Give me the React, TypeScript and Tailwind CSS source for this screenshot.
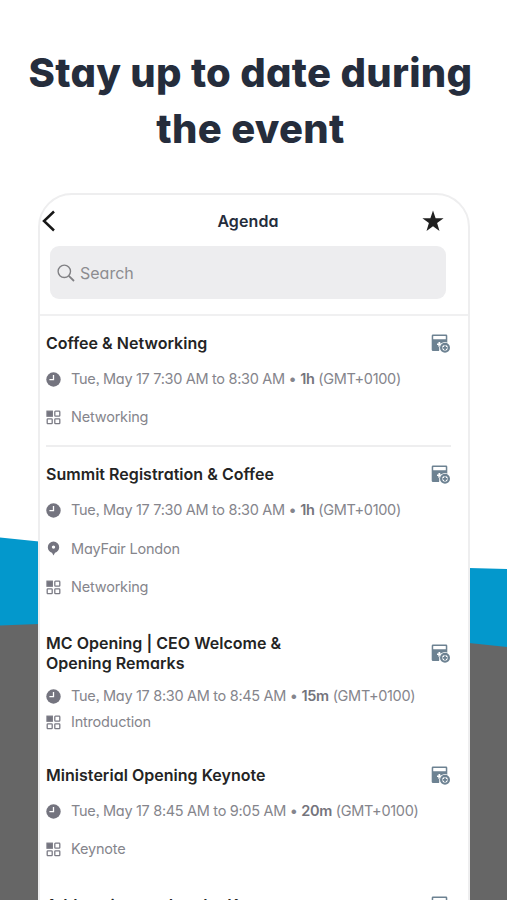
import type { ReactNode } from 'react';

const font = "font-['Inter','Open_Sans',sans-serif] [font-feature-settings:'cv11','ss03']";

function ClockIcon() {
  return (
    <svg className="h-[15px] w-[15px]" viewBox="0 0 15 15">
      <circle cx="7.5" cy="7.5" r="7.2" fill="#74747f" />
      <path d="M7.5 3v4.7H3.4" fill="none" stroke="#fff" strokeWidth="1.3" />
    </svg>
  );
}

function TagIcon() {
  return (
    <svg className="h-[15px] w-[15px]" viewBox="0 0 15 15" fill="none" stroke="#7b7b85" strokeWidth="1.3">
      <rect x="1" y="1.2" width="5.3" height="5" fill="#74747f" />
      <rect x="8.8" y="1.2" width="5" height="5" rx=".7" />
      <rect x="1.2" y="8.9" width="5" height="4.8" rx=".7" />
      <rect x="8.8" y="8.9" width="5" height="4.8" rx=".7" />
    </svg>
  );
}

function PinIcon() {
  return (
    <svg className="h-[15px] w-[15px]" viewBox="0 0 15 15">
      <path d="M7.5.6a5.7 5.7 0 0 0-5.7 5.7c0 2.7 1.9 4.8 4.2 5.5l1.5 2.8L9 11.8c2.3-.7 4.2-2.8 4.2-5.5A5.7 5.7 0 0 0 7.5.6Z" fill="#74747f" />
      <circle cx="7.5" cy="6.1" r="1.7" fill="#fff" />
    </svg>
  );
}

function CalendarPlus() {
  return (
    <svg className="mt-[2px] h-5 w-5 shrink-0" viewBox="0 0 20 20">
      <path d="M2 .5h13a1.300 1.300 0 0 1 1.300 1.300V9.500H10L8 17H2A1.300 1.300 0 0 1 .7 15.700V1.800A1.300 1.300 0 0 1 2 .5Z" fill="#6d8292" />
      <rect x="2.200" y="2" width="12.600" height="3.300" rx=".5" fill="#fff" />
      <path d="M7.300 13V11H6V9.500H7.500V8h1.500l1 2.500" fill="#fff" />
      <circle cx="14" cy="13.800" r="5.800" fill="#fff" />
      <circle cx="14" cy="13.800" r="3.900" fill="#fff" stroke="#6d8292" strokeWidth="2.200" />
      <path d="M14 11.500v4.600M11.700 13.800h4.600" stroke="#6d8292" strokeWidth="1.700" />
    </svg>
  );
}

function Row({ icon, children }: { icon: ReactNode; children: ReactNode }) {
  return (
    <div className="flex h-5 items-center gap-[10px] text-[14.5px] tracking-[-0.2px] whitespace-nowrap text-[#85858c]">
      {icon}
      {children}
    </div>
  );
}

function Title({ children }: { children: ReactNode }) {
  return (
    <div className="flex items-center justify-between">
      <h2 className="text-[16px] leading-5 font-semibold tracking-[0.03px] whitespace-nowrap text-[#242424]">{children}</h2>
      <CalendarPlus />
    </div>
  );
}

function Time({ range, length }: { range: string; length: string }) {
  return (
    <Row icon={<ClockIcon />}>
      <span className="tracking-[-0.31px]">
        Tue, May 17 {range} • <b className="font-semibold text-[#74747c]">{length}</b> (GMT+0100)
      </span>
    </Row>
  );
}

export default function App() {
  return (
    <main className={`relative isolate h-[900px] w-[507px] overflow-hidden bg-white ${font}`}>
      <svg className="absolute inset-0 -z-10 h-full w-full" viewBox="0 0 507 900">
        <path d="M0 537.500L39 541.500L469 568L507 569V900H0Z" fill="#0398cc" />
        <path d="M0 625.500L39 624L469 643L507 647V900H0Z" fill="#666" />
      </svg>
      <h1 className="pt-[45px] pr-[6px] text-center text-[40px] leading-[56px] font-extrabold tracking-[0.3px] text-[#252d3c]">
        <span className="block whitespace-nowrap">Stay up to date during</span>
        <span className="block">the event</span>
      </h1>
      <section className="mt-9 ml-[38px] h-[760px] w-[432px] rounded-t-[34px] border-2 border-[#eeeeef] bg-white">
        <header className="flex h-[51px] items-center justify-between pr-6 pl-[2px]">
          <svg className="h-[22px] w-[14px]" viewBox="0 0 14 22">
            <path d="M12 1.500L2 11l10 9.500" fill="none" stroke="#171717" strokeWidth="2.500" />
          </svg>
          <h2 className="pl-[18px] text-[16px] font-semibold tracking-[0.1px] text-[#252d3c]">Agenda</h2>
          <svg className="h-[22px] w-[22px]" viewBox="0 0 22 22">
            <path d="M11 .5l2.600 7.700h8l-6.500 4.900 2.400 7.900L11 16.300 4.500 21l2.400-7.900L.4 8.200h8Z" fill="#202020" />
          </svg>
        </header>
        <div className="ml-[10px] flex h-[53px] w-[396px] items-center gap-[5px] rounded-[9px] bg-[#ededef] pl-[7px] text-[16px] text-[#8c8c90]">
          <svg className="h-[18px] w-[18px]" viewBox="0 0 18 18" fill="none" stroke="#808084" strokeWidth="1.400">
            <circle cx="7.300" cy="7.300" r="6.200" />
            <path d="M11.800 11.800L17 17" strokeWidth="1.800" />
          </svg>
          <span>Search</span>
        </div>
        <div className="mt-[15px] h-[2px] bg-[#f0f0f1]" />
        <div className="w-[411px] pl-[6px]">
          <article className="h-[131px] border-b-2 border-[#eeeeef] pt-4">
            <Title>Coffee &amp; Networking</Title>
            <div className="mt-[15px] flex flex-col gap-[18px]">
              <Time range="7:30 AM to 8:30 AM" length="1h" />
              <Row icon={<TagIcon />}>Networking</Row>
            </div>
          </article>
          <article className="h-[171px] pt-4">
            <Title>Summit Registration &amp; Coffee</Title>
            <div className="mt-[15px] flex flex-col gap-[18.5px]">
              <Time range="7:30 AM to 8:30 AM" length="1h" />
              <Row icon={<PinIcon />}>MayFair London</Row>
              <Row icon={<TagIcon />}>Networking</Row>
            </div>
          </article>
          <article className="h-[131px] pt-[15px]">
            <Title>MC Opening | CEO Welcome &amp;<br />Opening Remarks</Title>
            <div className="mt-[13px] flex flex-col gap-[6px]">
              <Time range="8:30 AM to 8:45 AM" length="15m" />
              <Row icon={<TagIcon />}>Introduction</Row>
            </div>
          </article>
          <article className="h-[131px] pt-[15px]">
            <Title>Ministerial Opening Keynote</Title>
            <div className="mt-[15px] flex flex-col gap-[18px]">
              <Time range="8:45 AM to 9:05 AM" length="20m" />
              <Row icon={<TagIcon />}>Keynote</Row>
            </div>
          </article>
          <article className="pt-[14px]">
            <Title>Addressing our Leader K</Title>
          </article>
        </div>
      </section>
    </main>
  );
}
